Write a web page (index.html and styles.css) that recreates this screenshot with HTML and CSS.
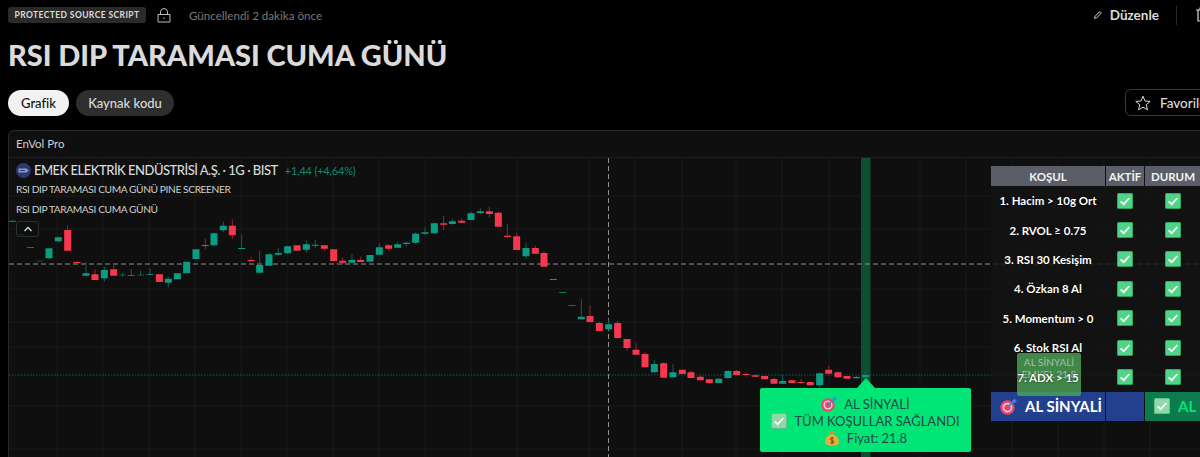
FILE: index.html
```html
<!DOCTYPE html>
<html lang="tr">
<head>
<meta charset="utf-8">
<title>RSI DIP TARAMASI CUMA GÜNÜ</title>
<link rel="stylesheet" href="styles.css">
</head>
<body>
<svg class="defs" width="0" height="0" aria-hidden="true">
  <symbol id="check" viewBox="0 0 16 16">
    <rect x="0" y="0" width="16" height="16" rx="1.500" fill="#2f9d5e"/>
    <rect x="0.800" y="0.800" width="14.400" height="14.200" rx="1" fill="#50d488"/>
    <path d="M3.600 8.400 6.700 11.200 12.400 5" fill="none" stroke="#fff" stroke-width="1.800"/>
  </symbol>
  <symbol id="check-soft" viewBox="0 0 16 16">
    <rect x="0" y="0" width="16" height="16" rx="1.500" fill="#5fb98a"/>
    <rect x="0.800" y="0.800" width="14.400" height="14.200" rx="1" fill="#8fd8aa"/>
    <path d="M3.600 8.400 6.700 11.200 12.400 5" fill="none" stroke="#f4fff8" stroke-width="1.800"/>
  </symbol>
  <symbol id="target" viewBox="0 0 16 16">
    <circle cx="7" cy="9" r="6.800" fill="#e8476a"/>
    <circle cx="7" cy="9" r="4.600" fill="#f3c6cf"/>
    <circle cx="7" cy="9" r="3" fill="#e8476a"/>
    <path d="M7 9 13 3" stroke="#4a7fd6" stroke-width="1.600"/>
    <path d="M11.500 2.500 14 0.500 14.500 2 16 2.500 13.500 5z" fill="#3f88e8"/>
  </symbol>
  <symbol id="bag" viewBox="0 0 16 16">
    <path d="M5 1h6L9.800 4.500h-3.600z" fill="#d9902a"/>
    <path d="M6 4.500h4C13 6.500 15 9 15 11.500 15 14.500 12 15.500 8 15.500S1 14.500 1 11.500C1 9 3 6.500 6 4.500z" fill="#f2ac3c"/>
    <path d="M9.800 8.300C9 7.500 6.500 7.600 6.500 9.100S10 10.300 10 11.900 7 13.600 6.200 12.600M8.100 6.800v7.300" fill="none" stroke="#6b4a12" stroke-width="1"/>
  </symbol>
</svg>

<div class="page">
  <header class="meta">
    <div class="meta-left">
      <span class="badge">PROTECTED SOURCE SCRIPT</span>
      <svg class="lock" viewBox="0 0 14 15" width="14" height="15"><path d="M3.500 6.500V4a3.500 3.500 0 0 1 7 0v2.500M1 6.500h12v7.500H1zM7 9.500v1.500" fill="none" stroke="#bdbdbd" stroke-width="1"/></svg>
      <span class="updated">Güncellendi 2 dakika önce</span>
    </div>
    <div class="meta-right">
      <button class="edit">
        <svg viewBox="0 0 10 10" width="10" height="10"><path d="M0.700 9.300 1.300 6.800 6.900 1.100a1 1 0 0 1 1.400 0l.6.600a1 1 0 0 1 0 1.400L3.200 8.700z" fill="none" stroke="#e6e6e6" stroke-width="1.200"/></svg>
        Düzenle
      </button>
      <span class="sep"></span>
      <svg class="trash" viewBox="0 0 14 16" width="14" height="16"><path d="M1 3h12M3 3v11h8V3M5 3V1h4v2" fill="none" stroke="#dbdbdb" stroke-width="1.200"/></svg>
    </div>
  </header>

  <h1 class="title">RSI DIP TARAMASI CUMA GÜNÜ</h1>

  <nav class="tabs">
    <div class="tab-group">
      <button class="tab tab-active">Grafik</button>
      <button class="tab tab-plain">Kaynak kodu</button>
    </div>
    <button class="fav">
      <svg viewBox="0 0 16 16" width="16" height="16"><path d="M8 1.200 10 6l5.200.4-4 3.400 1.300 5L8 12.200 3.500 14.800l1.300-5-4-3.400L6 6z" fill="none" stroke="#dbdbdb" stroke-width="1"/></svg>
      Favoriler
    </button>
  </nav>

  <section class="frame">
    <div class="frame-head">EnVol Pro</div>
    <div class="plot">
      <svg class="chart" viewBox="9 158 1191 299" width="1191" height="299">
        <path class="grid" d="M57 158V457M103 158V457M149 158V457M195 158V457M241 158V457M287 158V457M333 158V457M379 158V457M425 158V457M471 158V457M517 158V457M589 158V457M635 158V457M682 158V457M736 158V457M782 158V457M829 158V457M920 158V457M966 158V457M1012 158V457M1058 158V457M1104 158V457M1150 158V457M9 196H1200M9 229H1200M9 289H1200M9 322H1200M9 347H1200M9 406H1200M9 449H1200"/>
        <rect class="signal" x="861" y="158" width="9.500" height="299"/>
        <path class="dash" d="M9 264H1200"/>
        <path class="vdash" d="M608.500 158V457"/>
        <path class="dots" d="M9 375H1200"/>

        <g transform="translate(0 125) scale(.33333)">
          <path class="gw" d="M147 370V402M175 337V352M258 412V452M313 425V470M367 445V455M394 432V452M422 437V452M450 430V450M505 455V487M642 323V364M670 290V320M725 328V372M779 378V443M807 385V422M835 370V392M863 362V386M919 346V382M946 345V370M1056 387V414M1138 355V390M1193 350V370"/>
          <path class="rw" d="M203 300V377M231 408V417M285 433V465M341 420V452M616 340V372M697 283V342M753 395V410M973 360V378M1028 398V418M1082 395V412M1166 358V378"/>
          <path class="gb" d="M37 287V290M65 327V329M91 366V368M119 407V409M147 370V400M175 337V349M258 445V452M313 435V460M367 449V451M394 450V452M422 449V451M450 447V449M505 461V473M532 445V463M560 410V445M588 373V402M642 325V361M670 302V316M725 369V372M779 420V443M807 388V422M835 384V389M863 364V385M919 358V374M946 359V362M1056 405V413M1110 390V410M1138 367V389M1193 358V368"/>
          <path class="rb" d="M203 315V377M231 411V414M285 448V465M341 433V452M478 448V471M616 360V363M697 302V331M753 405V409M891 361V377M973 361V371M1001 373V408M1028 407V413M1082 405V411M1166 361V371"/>
        </g>
        <g transform="translate(400 190) scale(.33333)">
          <path class="gw" d="M19 155V170M47 127V162M75 112V136M103 98V132M157 88V104M213 65V90M241 55V72M378 158V206M544 328V388M626 388V420"/>
          <path class="rw" d="M131 78V120M185 85V99M268 50V83M295 65V110M322 102V143M350 128V180M406 167V191M432 183V230M570 345V398M598 395V423M653 393V444M681 447V482M708 460V494"/>
          <path class="gb" d="M19 158V162M47 131V158M75 127V131M103 100V130M157 94V102M213 70V90M241 64V69M378 174V199M460 267V270M488 306V308M516 345V347M544 380V388M626 403V418"/>
          <path class="rb" d="M131 100V104M185 92V98M268 64V72M295 68V110M322 137V141M350 139V180M406 174V191M432 189V230M570 378V396M598 399V423M653 399V444M681 447V474M708 479V494"/>
        </g>
        <g transform="translate(620 310) scale(.33333)">
          <path class="gw" d="M103 150V188M159 163V203M296 204V220M324 180V208M488 195V222M599 188V232M709 197V206M737 184V204"/>
          <path class="rw" d="M75 127V172M131 156V203M213 181V205M241 197V212M268 208V221M350 180V197M378 187V200M406 194V201M462 203V222M516 209V219M543 207V220M626 168V197M654 185V204"/>
          <path class="gb" d="M103 162V187M159 187V202M296 206V219M324 183V204M488 213V221M599 190V226M709 201V205M737 195V202"/>
          <path class="rb" d="M75 132V172M131 160V203M187 179V192M213 187V204M241 200V211M268 208V219M350 183V195M378 192V195M406 196V200M434 198V208M462 207V221M516 211V219M543 216V219M571 216V226M626 179V191M654 187V202M681 198V206"/>
        </g>
      </svg>

      <div class="legend">
        <div class="legend-main">
          <svg class="logo" viewBox="0 0 15 15" width="15" height="15"><circle cx="7.500" cy="7.500" r="7.500" fill="#2c3a73"/><path d="M2.500 5.500h8l2 2-2 2h-8z" fill="#8f9ac6"/><path d="M4 7.500h5" stroke="#2c3a73" stroke-width="1"/></svg>
          <span class="symbol">EMEK ELEKTRİK ENDÜSTRİSİ A.Ş. · 1G · BIST</span>
          <span class="change">+1,44 (+4,64%)</span>
        </div>
        <div class="legend-row">RSI DIP TARAMASI CUMA GÜNÜ PINE SCREENER</div>
        <div class="legend-row">RSI DIP TARAMASI CUMA GÜNÜ</div>
        <button class="collapse">
          <svg viewBox="0 0 10 6" width="10" height="6"><path d="M1.500 5 5 1.500 8.500 5" fill="none" stroke="#dbdbdb" stroke-width="1.300"/></svg>
        </button>
      </div>

      <div class="tooltip">
        <div class="tip-line"><svg width="16" height="16"><use href="#target"/></svg>AL SİNYALİ</div>
        <div class="tip-line"><svg width="16" height="16"><use href="#check-soft"/></svg>TÜM KOŞULLAR SAĞLANDI</div>
        <div class="tip-line"><svg width="16" height="16"><use href="#bag"/></svg>Fiyat: 21.8</div>
      </div>

      <div class="mini-label">AL SİNYALİ<br>EMKEL 21.8</div>

      <div class="table">
        <div class="th">KOŞUL</div><div class="th">AKTİF</div><div class="th">DURUM</div>
        <div class="td name"><span>1. Hacim &gt; 10g Ort</span></div><div class="td"><svg width="16" height="16"><use href="#check"/></svg></div><div class="td"><svg width="16" height="16"><use href="#check"/></svg></div>
        <div class="td name"><span>2. RVOL ≥ 0.75</span></div><div class="td"><svg width="16" height="16"><use href="#check"/></svg></div><div class="td"><svg width="16" height="16"><use href="#check"/></svg></div>
        <div class="td name"><span>3. RSI 30 Kesişim</span></div><div class="td"><svg width="16" height="16"><use href="#check"/></svg></div><div class="td"><svg width="16" height="16"><use href="#check"/></svg></div>
        <div class="td name"><span>4. Özkan 8 Al</span></div><div class="td"><svg width="16" height="16"><use href="#check"/></svg></div><div class="td"><svg width="16" height="16"><use href="#check"/></svg></div>
        <div class="td name"><span>5. Momentum &gt; 0</span></div><div class="td"><svg width="16" height="16"><use href="#check"/></svg></div><div class="td"><svg width="16" height="16"><use href="#check"/></svg></div>
        <div class="td name"><span>6. Stok RSI Al</span></div><div class="td"><svg width="16" height="16"><use href="#check"/></svg></div><div class="td"><svg width="16" height="16"><use href="#check"/></svg></div>
        <div class="td name"><span>7. ADX &gt; 15</span></div><div class="td"><svg width="16" height="16"><use href="#check"/></svg></div><div class="td"><svg width="16" height="16"><use href="#check"/></svg></div>
        <div class="foot foot-blue"><svg width="17" height="17"><use href="#target"/></svg>AL SİNYALİ</div>
        <div class="foot foot-blank"></div>
        <div class="foot foot-green"><svg width="16" height="16"><use href="#check-soft"/></svg>AL</div>
      </div>
    </div>
  </section>
</div>
</body>
</html>
```

FILE: styles.css
```css
* { box-sizing: border-box; }
html, body { margin: 0; height: 457px; overflow: hidden; background: #000; }
body { font-family: "Lato", "Noto Sans", sans-serif; color: #dbdbdb; }
button { font: inherit; color: inherit; background: none; border: 0; padding: 0; }
.defs { position: absolute; }

.page { width: 1240px; padding-left: 8px; }

.meta { display: flex; justify-content: space-between; align-items: center; height: 30px; }
.meta-left { display: flex; align-items: center; }
.badge { width: 138px; height: 16px; line-height: 16px; text-align: center; background: #2a2a2a; border-radius: 3px; font-size: 8.500px; font-weight: 700; letter-spacing: .4px; color: #dbdbdb; white-space: nowrap; }
.lock { margin-left: 11px; }
.updated { margin-left: 18px; font-size: 11.600px; color: #787878; }
.meta-right { display: flex; align-items: center; width: 146px; }
.edit { display: flex; align-items: center; gap: 8px; font-size: 13.500px; font-weight: 700; width: 65px; white-space: nowrap; }
.sep { width: 1px; height: 19px; background: #2a2a2a; margin-left: 17px; }
.trash { margin-left: 18px; }

.title { margin: 6px 0 0; height: 38px; line-height: 38px; font-size: 29px; font-weight: 900; letter-spacing: -.05px; color: #dbdbdb; white-space: nowrap; }

.tabs { display: flex; justify-content: space-between; align-items: center; margin-top: 15px; height: 27px; }
.tab-group { display: flex; gap: 7px; }
.tab { height: 26px; border-radius: 13px; font-size: 13px; font-weight: 500; white-space: nowrap; }
.tab-active { width: 61px; background: #f2f2f2; color: #131313; }
.tab-plain { width: 98px; background: #2e2e2e; }
.fav { display: flex; align-items: center; gap: 9px; width: 115px; height: 27px; padding-left: 9px; border: 1px solid #3a3a3a; border-radius: 6px; font-size: 13.500px; font-weight: 500; white-space: nowrap; }

.frame { margin-top: 14px; height: 340px; background: #0f0f0f; border: 1px solid #2a2a2a; border-radius: 6px 0 0 0; }
.frame-head { height: 27px; line-height: 25px; padding-left: 7px; font-size: 11.500px; color: #cfcfcf; border-bottom: 1px solid #1d1d1d; }
.plot { position: relative; height: 312px; }

.chart { display: block; }
.grid { stroke: #1b1b1b; fill: none; stroke-width: 1; }
.signal { fill: #0d4f31; }
.dash { stroke: #8f8f8f; stroke-width: 1; stroke-dasharray: 5 3; }
.vdash { stroke: #8f8f8f; stroke-width: 1; stroke-dasharray: 5 3; }
.dots { stroke: #0b5f50; stroke-width: 1; stroke-dasharray: 1.500 1.500; }
.gw, .rw, .gb, .rb { fill: none; }
.gw { stroke: #0b6456; stroke-width: 3; }
.rw { stroke: #8e2733; stroke-width: 3; }
.gb { stroke: #0b9c84; stroke-width: 21; }
.rb { stroke: #f7374f; stroke-width: 21; }

.legend { position: absolute; left: 7px; top: 4px; }
.legend-main { display: flex; align-items: center; height: 16px; }
.logo { margin-right: 3px; }
.symbol { font-size: 13px; font-weight: 500; letter-spacing: -.5px; color: #dbdbdb; white-space: nowrap; }
.change { margin-left: 7px; font-size: 11px; letter-spacing: -.2px; color: #0a8a74; white-space: nowrap; }
.legend-row { margin-top: 3px; height: 17px; line-height: 17px; font-size: 10.200px; letter-spacing: -.4px; color: #d0d0d0; white-space: nowrap; }
.collapse { display: flex; align-items: center; justify-content: center; width: 23px; height: 16px; margin-top: 3px; border: 1px solid #2e2e2e; border-radius: 3px; background: rgba(15,15,15,.7); }

.tooltip { position: absolute; left: 751px; top: 230px; width: 211px; height: 64px; padding-top: 7px; background: #00e676; border-radius: 2px; color: #24474a; font-size: 13px; text-align: center; }
.tooltip::before { content: ""; position: absolute; left: 97px; top: -10px; border-left: 9px solid transparent; border-right: 9px solid transparent; border-bottom: 10px solid #00e676; }
.tip-line { display: flex; justify-content: center; align-items: center; gap: 7px; height: 17px; white-space: nowrap; }

.mini-label { position: absolute; z-index: 1; left: 1008px; top: 195px; width: 64px; height: 43px; padding-top: 3px; border-radius: 2px; background: rgba(78,168,90,.78); color: rgba(255,255,255,.5); font-size: 10px; line-height: 12px; text-align: center; white-space: nowrap; }

.table { position: absolute; left: 982px; top: 8px; display: grid; grid-template-columns: 114px 38px 56px; column-gap: 1px; grid-template-rows: 20px repeat(7, 29.400px) 29px; background: rgba(20,20,20,.82); color: #fff; }
.th { display: flex; align-items: center; justify-content: center; background: #5b5e69; font-size: 11.500px; font-weight: 700; color: #f2f2f2; }
.td { display: flex; align-items: center; justify-content: center; }
.name { font-size: 11.500px; font-weight: 700; }
.name span { position: relative; z-index: 2; text-shadow: 0 0 2px #000; }
.foot { display: flex; align-items: center; white-space: nowrap; }
.foot-blue { gap: 8px; padding-left: 9px; background: #23408e; font-size: 15px; font-weight: 700; }
.foot-blank { background: #23408e; }
.foot-green { gap: 8px; padding-left: 9px; background: #0c7c4c; color: #00e676; font-size: 15px; font-weight: 700; }
```
